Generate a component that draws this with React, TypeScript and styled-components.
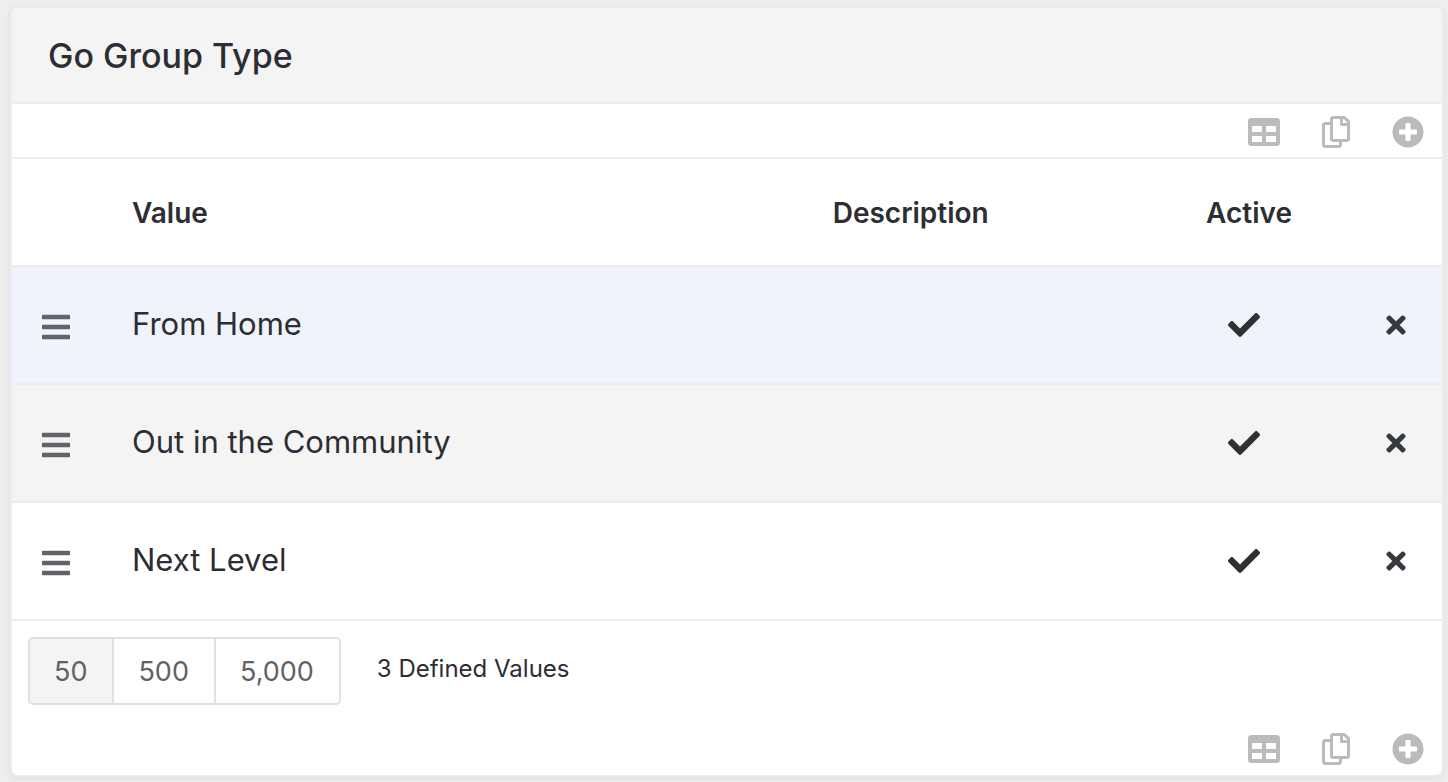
import React from "react";
import styled, { createGlobalStyle } from "styled-components";
import { FaBars, FaCheck, FaPlusCircle, FaRegCopy, FaTable, FaTimes } from "react-icons/fa";

const GlobalStyle = createGlobalStyle`
  *, *::before, *::after { box-sizing: border-box; }
  body {
    margin: 0;
    background: #eeeeee;
    color: #2c2e33;
    font-family: Inter, "Liberation Sans", sans-serif;
  }
`;

const Panel = styled.section`
  margin: 6px 4px 5px 10px;
  border: 2px solid #ececec;
  border-radius: 8px;
  background: #fff;
  overflow: hidden;
  box-shadow: 0 2px 8px rgba(0, 0, 0, 0.06);
`;

const PanelHeader = styled.header`
  padding: 26px 36px 24px;
  background: #f4f4f4;
  border-bottom: 2px solid #ededed;
`;

const PanelTitle = styled.h1`
  margin: 0;
  font-size: 34px;
  line-height: 44px;
  font-weight: 500;
`;

const ActionBar = styled.div<{ $divided?: boolean }>`
  display: flex;
  justify-content: flex-end;
  gap: 40px;
  padding: 12px 18px ${(p) => (p.$divided ? 9 : 10)}px;
  border-bottom: ${(p) => (p.$divided ? "2px solid #ededed" : "none")};
`;

const IconButton = styled.button<{ $size?: number; $color?: string }>`
  display: flex;
  align-items: center;
  justify-content: center;
  width: ${(p) => p.$size ?? 32}px;
  height: 32px;
  padding: 0;
  border: 0;
  background: none;
  color: ${(p) => p.$color ?? "#bbbbbb"};
  cursor: pointer;

  svg {
    display: block;
    flex: none;
    width: auto;
    height: 32px;
  }
`;

const RemoveButton = styled(IconButton)`
  margin-left: auto;

  svg { height: 28px; }
`;

const Grid = styled.table`
  width: 100%;
  table-layout: fixed;
  border-collapse: separate;
  border-spacing: 0;
`;

const Column = styled.col<{ $width?: string }>`
  width: ${(p) => p.$width ?? "auto"};
`;

const HeadCell = styled.th`
  height: 108px;
  padding: 2px 0 0 24px;
  border-bottom: 2px solid #ededed;
  font-size: 28px;
  line-height: 36px;
  font-weight: 600;
  text-align: left;
`;

const Row = styled.tr<{ $background: string }>`
  background: ${(p) => p.$background};
`;

const Cell = styled.td`
  height: 118px;
  padding: 0 24px 2px;
  border-bottom: 2px solid #ededed;
  font-size: 31px;
  line-height: 40px;
`;

const HandleCell = styled(Cell)`
  padding: 4px 0 0 30px;
`;

const CheckCell = styled(Cell)`
  padding: 0;

  svg {
    display: block;
    width: 32px;
    height: 32px;
    margin: 0 auto;
    color: #2f3032;
  }
`;

const RemoveCell = styled(Cell)`
  padding: 0 36px 0 0;
`;

const PagerRow = styled.div`
  display: flex;
  align-items: center;
  gap: 36px;
  padding: 16px;
`;

const Pager = styled.div`
  display: flex;
  height: 68px;
  border: 2px solid #dfe0e1;
  border-radius: 5px;
  overflow: hidden;
`;

const PageSize = styled.button`
  padding: 2px 25px 0 24px;
  border: 0;
  background: #fff;
  color: #626262;
  font-family: inherit;
  font-size: 27px;
  line-height: 36px;
  cursor: pointer;

  & + & { border-left: 2px solid #dfe0e1; }
  &[aria-pressed="true"] { background: #f4f4f4; }
`;

const Count = styled.p`
  margin: 0;
  padding-bottom: 4px;
  font-size: 24px;
  line-height: 32px;
`;

const values = [
  { name: "From Home", background: "#eef3fc" },
  { name: "Out in the Community", background: "#f4f4f4" },
  { name: "Next Level", background: "#ffffff" },
];

const pageSizes = ["50", "500", "5,000"];

function Actions({ divided }: { divided?: boolean }) {
  return (
    <ActionBar $divided={divided}>
      <IconButton type="button" aria-label="Export to Excel"><FaTable /></IconButton>
      <IconButton type="button" aria-label="Copy"><FaRegCopy /></IconButton>
      <IconButton type="button" aria-label="Add value"><FaPlusCircle /></IconButton>
    </ActionBar>
  );
}

export default function App() {
  const [pageSize, setPageSize] = React.useState("50");

  return (
    <>
      <GlobalStyle />
      <Panel>
        <PanelHeader>
          <PanelTitle>Go Group Type</PanelTitle>
        </PanelHeader>
        <Actions divided />
        <Grid>
          <colgroup>
            <Column $width="96px" />
            <Column $width="49%" />
            <Column />
            <Column $width="124px" />
            <Column $width="136px" />
          </colgroup>
          <thead>
            <tr>
              <HeadCell />
              <HeadCell scope="col">Value</HeadCell>
              <HeadCell scope="col">Description</HeadCell>
              <HeadCell scope="col">Active</HeadCell>
              <HeadCell />
            </tr>
          </thead>
          <tbody>
            {values.map((value) => (
              <Row key={value.name} $background={value.background}>
                <HandleCell>
                  <IconButton type="button" $size={28} $color="#626369" aria-label={`Reorder ${value.name}`}>
                    <FaBars />
                  </IconButton>
                </HandleCell>
                <Cell>{value.name}</Cell>
                <Cell />
                <CheckCell><FaCheck role="img" aria-label="Active" /></CheckCell>
                <RemoveCell>
                  <RemoveButton type="button" $size={20} $color="#343a40" aria-label={`Delete ${value.name}`}>
                    <FaTimes />
                  </RemoveButton>
                </RemoveCell>
              </Row>
            ))}
          </tbody>
        </Grid>
        <PagerRow>
          <Pager role="group" aria-label="Rows per page">
            {pageSizes.map((size) => (
              <PageSize key={size} type="button" aria-pressed={size === pageSize} onClick={() => setPageSize(size)}>
                {size}
              </PageSize>
            ))}
          </Pager>
          <Count>3 Defined Values</Count>
        </PagerRow>
        <Actions />
      </Panel>
    </>
  );
}
